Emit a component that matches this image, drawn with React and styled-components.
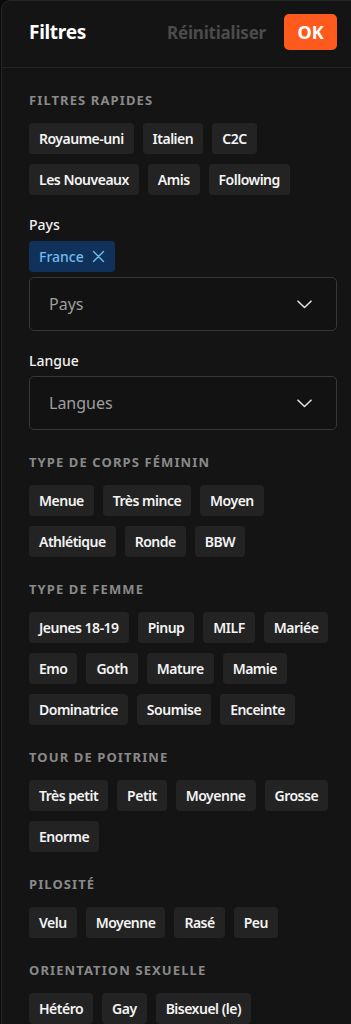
import React from "react";
import styled, { createGlobalStyle } from "styled-components";

const GlobalStyle = createGlobalStyle`
  html, body {
    margin: 0;
    padding: 0;
    background: #0a0a0a;
    font-family: "Noto Sans", "Open Sans", sans-serif;
  }
`;

const Panel = styled.div`
  margin-left: 1px;
  min-height: 1024px;
  background: #141414;
  border: 1px solid #262626;
  border-right: none;
  border-bottom: none;
  border-top-left-radius: 9px;
  box-sizing: border-box;
  overflow: hidden;
`;

const Header = styled.div`
  display: flex;
  align-items: center;
  height: 67px;
  box-sizing: border-box;
  padding: 0 14px 4px 27px;
  border-bottom: 1px solid #222;
`;

const Title = styled.h1`
  flex: 1;
  margin: 0;
  font-size: 19px;
  font-weight: 700;
  color: #fff;
  letter-spacing: -0.3px;
`;

const ResetButton = styled.button`
  background: none;
  border: none;
  padding: 0;
  margin-right: 18px;
  font-family: inherit;
  font-size: 17px;
  font-weight: 700;
  letter-spacing: -0.2px;
  color: #4b4b4b;
  cursor: pointer;
`;

const OkButton = styled.button`
  width: 53px;
  height: 36px;
  border: none;
  border-radius: 5px;
  background: #ff5a1e;
  color: #fff;
  font-family: inherit;
  font-size: 18px;
  font-weight: 700;
  cursor: pointer;
`;

const Content = styled.div`
  display: flex;
  flex-direction: column;
  padding: 24px 14px 0 27px;
`;

const Section = styled.section`
  margin-top: ${(p) => (p.$first ? 0 : 24)}px;
`;

const SectionTitle = styled.h2`
  margin: 0 0 15px;
  font-size: 13px;
  line-height: 16px;
  font-weight: 700;
  letter-spacing: 1.1px;
  text-transform: uppercase;
  color: #898989;
`;

const ChipList = styled.div`
  display: flex;
  flex-wrap: wrap;
  gap: 10px 9px;
`;

const Chip = styled.button`
  height: 31px;
  padding: 0 10px;
  border: none;
  border-radius: 4px;
  background: #232323;
  color: #f4f4f4;
  font-family: inherit;
  font-size: 14px;
  font-weight: 600;
  letter-spacing: -0.5px;
  cursor: pointer;
`;

const Field = styled.div`
  margin-top: 21px;
  display: flex;
  flex-direction: column;
`;

const FieldLabel = styled.label`
  font-size: 14px;
  line-height: 18px;
  font-weight: 500;
  color: #f2f2f2;
  margin-bottom: ${(p) => p.$gap}px;
`;

const Tag = styled.span`
  align-self: flex-start;
  display: inline-flex;
  align-items: center;
  gap: 8px;
  height: 31px;
  padding: 0 10px;
  margin-bottom: 5px;
  border-radius: 4px;
  background: #10325a;
  color: #6dbcef;
  font-size: 14px;
  font-weight: 500;
`;

const Select = styled.div`
  display: flex;
  align-items: center;
  justify-content: space-between;
  height: 54px;
  box-sizing: border-box;
  padding: 0 24px 0 19px;
  border: 1px solid #373737;
  border-radius: 5px;
  background: #121212;
  color: #9e9e9e;
  font-size: 16px;
`;

const CloseIcon = () => (
  <svg width="13" height="13" viewBox="0 0 13 13" fill="none">
    <path d="M1.5 1.5l10 10M11.5 1.5l-10 10" stroke="#6dbcef" strokeWidth="1.4" strokeLinecap="round" />
  </svg>
);

const Chevron = () => (
  <svg width="15" height="9" viewBox="0 0 15 9" fill="none">
    <path d="M1 1.2l6.5 6.3L14 1.2" stroke="#e0e0e0" strokeWidth="1.6" strokeLinecap="round" strokeLinejoin="round" />
  </svg>
);

const sections = [
  { title: "Type de corps féminin", items: ["Menue", "Très mince", "Moyen", "Athlétique", "Ronde", "BBW"] },
  {
    title: "Type de femme",
    items: ["Jeunes 18-19", "Pinup", "MILF", "Mariée", "Emo", "Goth", "Mature", "Mamie", "Dominatrice", "Soumise", "Enceinte"],
  },
  { title: "Tour de poitrine", items: ["Très petit", "Petit", "Moyenne", "Grosse", "Enorme"] },
  { title: "Pilosité", items: ["Velu", "Moyenne", "Rasé", "Peu"] },
  { title: "Orientation sexuelle", items: ["Hétéro", "Gay", "Bisexuel (le)"] },
];

const quick = ["Royaume-uni", "Italien", "C2C", "Les Nouveaux", "Amis", "Following"];

const ChipSection = ({ title, items, first }) => (
  <Section $first={first}>
    <SectionTitle>{title}</SectionTitle>
    <ChipList>
      {items.map((item) => (
        <Chip key={item}>{item}</Chip>
      ))}
    </ChipList>
  </Section>
);

export default function App() {
  return (
    <>
      <GlobalStyle />
      <Panel>
        <Header>
          <Title>Filtres</Title>
          <ResetButton>Réinitialiser</ResetButton>
          <OkButton>OK</OkButton>
        </Header>
        <Content>
          <ChipSection title="Filtres rapides" items={quick} first />

          <Field>
            <FieldLabel $gap={7}>Pays</FieldLabel>
            <Tag>
              France <CloseIcon />
            </Tag>
            <Select>
              Pays <Chevron />
            </Select>
          </Field>

          <Field>
            <FieldLabel $gap={6}>Langue</FieldLabel>
            <Select>
              Langues <Chevron />
            </Select>
          </Field>

          {sections.map((s) => (
            <ChipSection key={s.title} title={s.title} items={s.items} />
          ))}
        </Content>
      </Panel>
    </>
  );
}
